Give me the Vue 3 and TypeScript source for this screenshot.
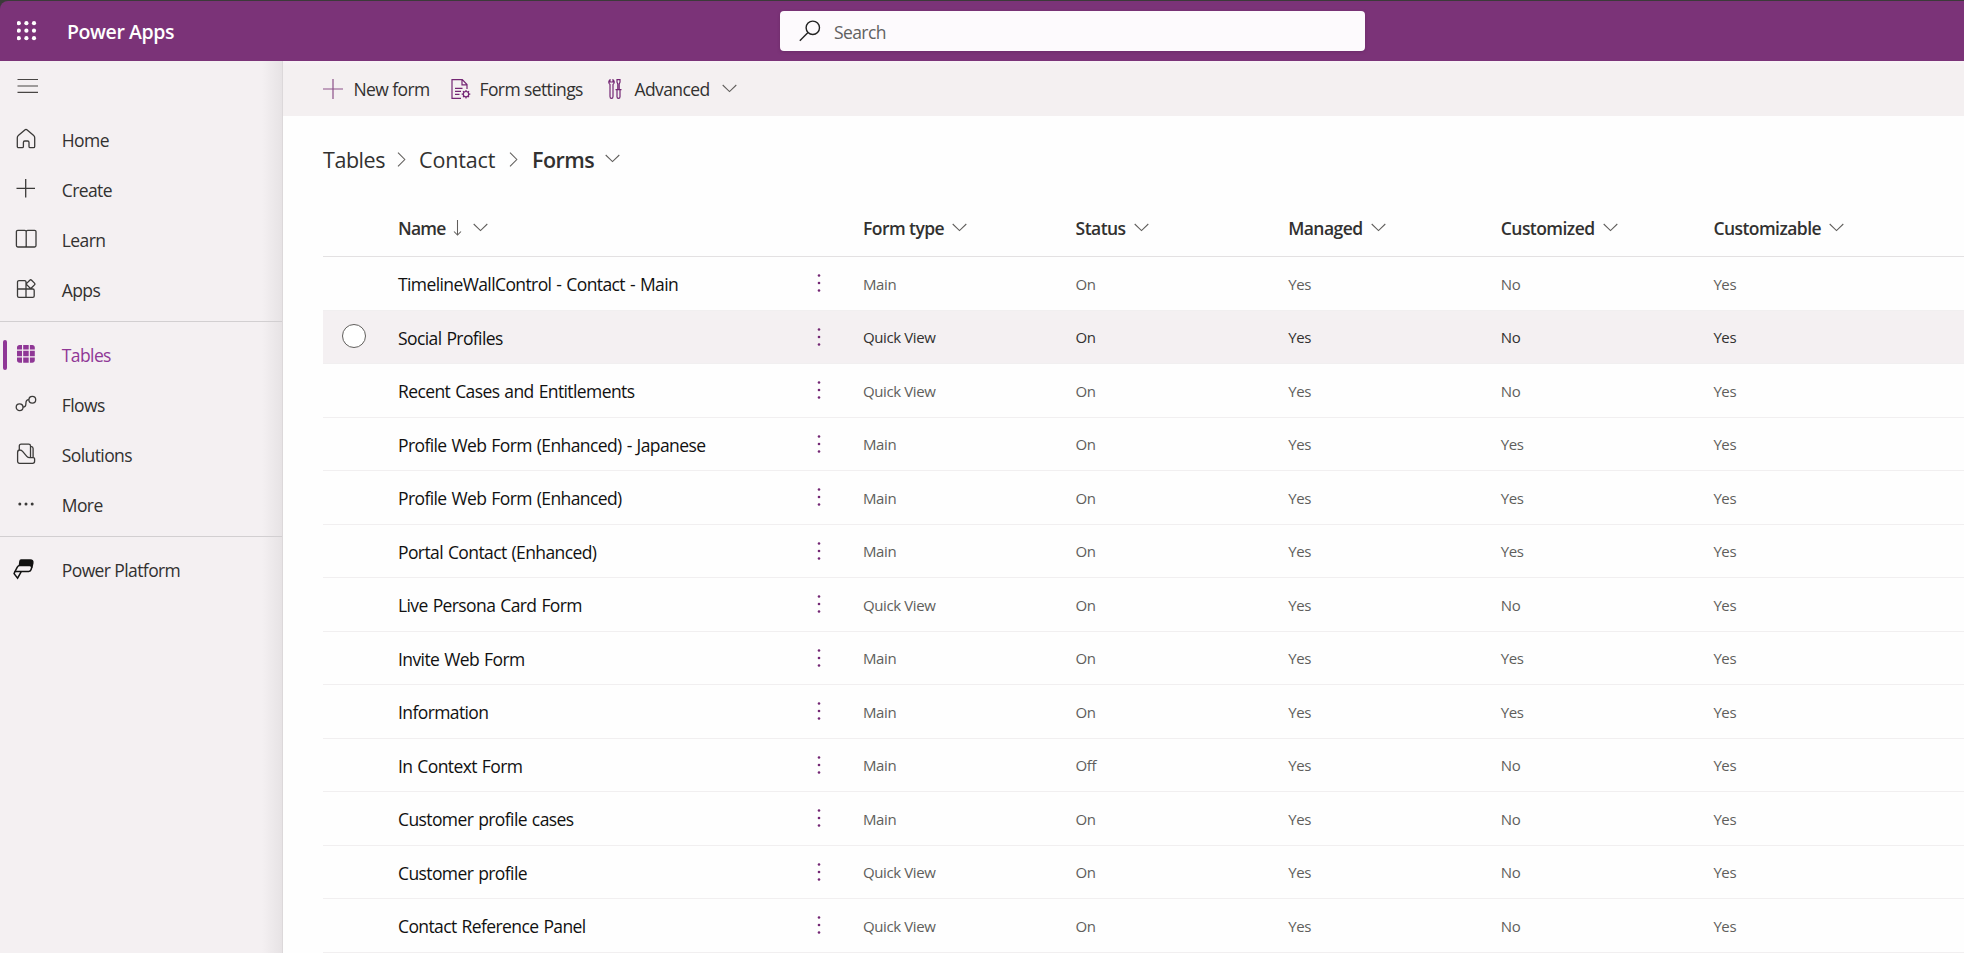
<script setup lang="ts">
interface NavItem { label: string; icon: string }
interface FormRow { name: string; type: string; status: string; managed: string; customized: string; customizable: string }

const navGroups: NavItem[][] = [
  [
    { label: 'Home', icon: 'home' },
    { label: 'Create', icon: 'plus' },
    { label: 'Learn', icon: 'book' },
    { label: 'Apps', icon: 'apps' },
  ],
  [
    { label: 'Tables', icon: 'tables' },
    { label: 'Flows', icon: 'flows' },
    { label: 'Solutions', icon: 'solutions' },
    { label: 'More', icon: 'more' },
  ],
  [{ label: 'Power Platform', icon: 'platform' }],
]

const columns: string[] = ['Form type', 'Status', 'Managed', 'Customized', 'Customizable']

const row = (name: string, type: string, customized: string, status = 'On'): FormRow => ({
  name, type, status, managed: 'Yes', customized, customizable: 'Yes',
})

const rows: FormRow[] = [
  row('TimelineWallControl - Contact - Main', 'Main', 'No'),
  row('Social Profiles', 'Quick View', 'No'),
  row('Recent Cases and Entitlements', 'Quick View', 'No'),
  row('Profile Web Form (Enhanced) - Japanese', 'Main', 'Yes'),
  row('Profile Web Form (Enhanced)', 'Main', 'Yes'),
  row('Portal Contact (Enhanced)', 'Main', 'Yes'),
  row('Live Persona Card Form', 'Quick View', 'No'),
  row('Invite Web Form', 'Main', 'Yes'),
  row('Information', 'Main', 'Yes'),
  row('In Context Form', 'Main', 'No', 'Off'),
  row('Customer profile cases', 'Main', 'No'),
  row('Customer profile', 'Quick View', 'No'),
  row('Contact Reference Panel', 'Quick View', 'No'),
]
const hovered = 1
</script>

<template>
  <div class="app">
    <header class="topbar">
      <svg class="waffle" width="20" height="20" viewBox="0 0 20 20" fill="#fff">
        <template v-for="y in 3" :key="y">
          <circle v-for="x in 3" :key="x" :cx="x * 7.6 - 5.8" :cy="y * 7.5 - 5.3" r="2.1" />
        </template>
      </svg>
      <span class="brand">Power Apps</span>
      <div class="search">
        <svg width="22" height="22" viewBox="0 0 22 22" fill="none" stroke="#222" stroke-width="1.4">
          <circle cx="13.8" cy="7.8" r="6.7" /><path d="M9 12.6 L.8 20.8" />
        </svg>
        <span class="search-text">Search</span>
      </div>
    </header>

    <div class="body">
      <nav class="sidebar">
        <div class="burger">
          <svg width="22" height="16" viewBox="0 0 22 16" stroke="#484644" stroke-width="1.2"><path d="M.5 1.5H21M.5 8H21M.5 14.3H21" /></svg>
        </div>
        <ul v-for="(group, g) in navGroups" :key="g" class="group">
          <li v-for="item in group" :key="item.label" class="nav" :class="{ active: item.label === 'Tables' }">
            <svg v-if="item.icon === 'home'" class="ico" viewBox="0 0 22 22"><path d="M2.3 9.7c0-.9.4-1.6 1-2.1l6.5-5.7c.8-.7 1.6-.7 2.4 0l6.500 5.700c.6.5 1 1.200 1 2.100v8.800c0 .7-.5 1.200-1.200 1.200h-3.300c-.7 0-1.200-.5-1.200-1.200v-4c0-.9-.5-1.500-1.400-1.500H9.800c-.9 0-1.400.6-1.400 1.500v4c0 .7-.5 1.200-1.200 1.200H3.500c-.7 0-1.200-.5-1.200-1.200z" /></svg>
            <svg v-else-if="item.icon === 'plus'" class="ico" viewBox="0 0 22 22"><path d="M10.700 1v18.500M1.500 10.300h18.500" /></svg>
            <svg v-else-if="item.icon === 'book'" class="ico" viewBox="0 0 22 22"><path d="M11.200 3.600C11.200 2.800 10.500 2.300 9.700 2.300H2.800c-.8 0-1.400.5-1.400 1.300v14c0 .8.600 1.400 1.400 1.400h6.900c.8 0 1.500-.5 1.500-1.300zM11.200 3.600c0-.8.700-1.300 1.500-1.300h6.900c.8 0 1.400.5 1.400 1.300v14c0 .8-.600 1.400-1.400 1.400h-6.900c-.8 0-1.500-.5-1.500-1.300z" /></svg>
            <svg v-else-if="item.icon === 'apps'" class="ico" viewBox="0 0 22 22"><path d="M11 10.800V19.300M11 11V4c0-.8-.6-1.400-1.400-1.400H4C3.200 2.600 2.500 3.200 2.500 4v13.900c0 .8.7 1.400 1.500 1.400h13.800c.8 0 1.400-.6 1.400-1.400v-5.500c0-.8-.6-1.400-1.400-1.400H2.500M14.800 2.200c.6-.6 1.200-.6 1.800 0l2.900 2.900c.6.600.6 1.200 0 1.800l-2.900 2.900c-.6.600-1.200.600-1.800 0l-2.900-2.900c-.6-.6-.6-1.200 0-1.800z" /></svg>
            <svg v-else-if="item.icon === 'tables'" class="ico solid" viewBox="0 0 22 22">
              <path d="M4.500 2H7v4.500H2v-2C2 3 3 2 4.500 2zM8.200 2h5.500v4.500H8.200zM14.900 2h2.400c1.500 0 2.500 1 2.500 2.500v2h-4.900zM2 7.800h5v5.400H2zM8.200 7.800h5.500v5.400H8.200zM14.900 7.800h4.900v5.400h-4.900zM2 14.500h5v5.300H4.500C3 19.800 2 18.800 2 17.300zM8.200 14.500h5.500v5.300H8.200zM14.900 14.500h4.900v2.800c0 1.500-1 2.500-2.500 2.500h-2.400z" />
            </svg>
            <svg v-else-if="item.icon === 'flows'" class="ico" viewBox="0 0 22 22"><circle cx="4.600" cy="14.200" r="3.400" /><circle cx="17.300" cy="6.700" r="3.400" /><path d="M8 14.200c2.200 0 2.900-1 2.900-3.700s.8-3.800 3-3.800" /></svg>
            <svg v-else-if="item.icon === 'solutions'" class="ico" viewBox="0 0 22 22"><path d="M4.300 6.800V3C4.300 1.900 5 1.200 6.100 1.200h7.600c1.100 0 1.800.7 1.800 1.800v11.500M2.600 9.500c0-1.700.8-2.500 2.200-2.500 1.300 0 2.100.5 3 1.600l4 4.700c.8.900 1.700 1.300 2.900 1.300h3.600c.8 0 1.300.5 1.300 1.200v2.500c0 1.200-.8 2-2 2H4.600c-1.200 0-2-.8-2-2zM16.200 3.300c1.300.2 1.900 1 1.900 2.200v9" /></svg>
            <svg v-else-if="item.icon === 'more'" class="ico solid" viewBox="0 0 22 22"><circle cx="4.800" cy="11" r="1.500" /><circle cx="11" cy="11" r="1.500" /><circle cx="17.200" cy="11" r="1.500" /></svg>
            <svg v-else class="ico platform" viewBox="0 0 22 22">
              <path fill="#111" d="M6 2h9.300c2 0 2.800 1.200 2.500 3l-.7 3.200c-.5-.9-1.400-1.400-2.600-1.400H4.500L5 3c.1-.6.500-1 1-1z" />
              <path d="M4.800 7.600h9.900c1.500 0 2.300.8 1.900 2.200l-.5 1.700c-.3 1.200-1.200 1.900-2.400 1.900H0l2.300-4.300c.6-1 1.300-1.500 2.500-1.500zM0 13.400l-.9 2.200 3.500 4.500 3.800-6.700" />
            </svg>
            <span class="nav-label">{{ item.label }}</span>
          </li>
        </ul>
      </nav>

      <main class="main">
        <div class="commands">
          <svg class="c-plus" width="20" height="20" viewBox="0 0 20 20"><path d="M10 0v20M0 10h20" /></svg>
          <span class="cmd cmd-new">New form</span>
          <svg class="c-doc" width="20" height="20" viewBox="0 0 20 20">
            <path d="M10 19.300H1V.7h10.300l4.700 4.800v4.500M11 .9v4.900h5M4 9.300h7.500M4 12.300h6M4 15.300h4.500" />
            <circle cx="15" cy="15.200" r="2.700" /><path d="M15 10.900v1.800M15 17.700v1.800M10.700 15.200h1.800M17.500 15.200h1.800M12 12.200l1.200 1.200M16.800 17l1.200 1.200M18 12.200l-1.200 1.200M13.200 17l-1.200 1.200" />
          </svg>
          <span class="cmd cmd-settings">Form settings</span>
          <svg class="c-tools" width="14" height="20" viewBox="0 0 14 20">
            <path d="M2 .8C.7 1.600.5 3.400 1.200 4.500l.8 1v12c0 1.200.6 1.900 1.500 1.900s1.500-.7 1.500-1.900v-12l.8-1C6.500 3.400 6.300 1.600 5 .8V3H2zM9 .7h3v2.500l-.8 1.800v5.500H9.800V5L9 3.200zM7.500 10.700h6M9 10.700v7.100c0 1 .6 1.600 1.500 1.600s1.500-.6 1.500-1.600v-7.100" />
          </svg>
          <span class="cmd cmd-adv">Advanced</span>
          <svg class="chev" width="15" height="9" viewBox="0 0 15 9"><path d="M.7 1l6.800 6.600L14.300 1" /></svg>
        </div>

        <div class="crumbs">
          <span class="crumb c1">Tables</span>
          <svg class="sep" width="9" height="15" viewBox="0 0 9 15"><path d="M1 .7l6.800 6.800L1 14.300" /></svg>
          <span class="crumb c2">Contact</span>
          <svg class="sep" width="9" height="15" viewBox="0 0 9 15"><path d="M1 .7l6.800 6.800L1 14.300" /></svg>
          <span class="crumb current">Forms</span>
          <svg class="chev" width="15" height="9" viewBox="0 0 15 9"><path d="M.7 1l6.800 6.600L14.300 1" /></svg>
        </div>

        <div class="grid">
          <div class="line head">
            <div class="cell name-head">
              <span class="th th-name">Name</span>
              <svg class="sort" width="9" height="16" viewBox="0 0 9 16"><path d="M4.500 0v15M1 11.500l3.500 3.500L8 11.500" /></svg>
              <svg class="chev" width="15" height="9" viewBox="0 0 15 9"><path d="M.7 1l6.800 6.600L14.300 1" /></svg>
            </div>
            <div v-for="c in columns" :key="c" class="cell">
              <span class="th">{{ c }}</span>
              <svg class="chev" width="15" height="9" viewBox="0 0 15 9"><path d="M.7 1l6.800 6.600L14.300 1" /></svg>
            </div>
          </div>
          <div v-for="(r, i) in rows" :key="r.name" class="line" :class="{ hover: i === hovered }">
            <div class="pick"><span v-if="i === hovered" class="radio"></span></div>
            <div class="name">{{ r.name }}</div>
            <svg class="dots" width="4" height="20" viewBox="0 0 4 20"><circle cx="2" cy="2.500" r="1.300" /><circle cx="2" cy="10" r="1.300" /><circle cx="2" cy="17.500" r="1.300" /></svg>
            <div class="cell val">{{ r.type }}</div>
            <div class="cell val">{{ r.status }}</div>
            <div class="cell val">{{ r.managed }}</div>
            <div class="cell val">{{ r.customized }}</div>
            <div class="cell val">{{ r.customizable }}</div>
          </div>
        </div>
      </main>
    </div>
  </div>
</template>

<style>
body { overflow: hidden; background: #fff; }
</style>

<style scoped>
* { box-sizing: border-box; }
.app {
  display: flex; flex-direction: column; height: 953px; overflow: hidden;
  font-family: 'Open Sans', 'Noto Sans', sans-serif; font-size: 17.500px; color: #323130; background: #3b3a39;
}
.app svg { flex: none; fill: none; }
.topbar {
  display: flex; align-items: center; height: 60px; margin-top: 1px; padding-left: 17px;
  background: #7b3378; border-top-left-radius: 8px; flex: none;
}
.app .waffle { fill: #fff; }
.brand { width: 712px; margin-left: 30px; color: #fff; font-size: 19.500px; font-weight: 600; letter-spacing: -.4px; padding-top: 1px; }
.search {
  display: flex; align-items: center; width: 585px; height: 40px; margin-left: 1px; padding-left: 19px;
  background: #fdfafd; border-radius: 4px; box-shadow: 0 1px 3px #5c245a80;
}
.search-text { margin: 1px 0 0 13px; color: #616161; letter-spacing: -.6px; }
.body { display: flex; flex: 1; min-height: 0; background: #fefefe; }
.sidebar {
  width: 283px; flex: none; border-right: 1px solid #dcd8da;
  background: linear-gradient(90deg, transparent 262px, #e6e2e4 283px), #f4f0f2;
}
.burger { height: 53px; padding: 17px 0 0 17px; }
.burger svg { display: block; }
.group { margin: 0; padding: 0; list-style: none; }
.group + .group { margin-top: 7px; padding-top: 7px; border-top: 1px solid #d2cfd1; }
.nav { display: flex; align-items: center; height: 50px; padding-left: 15.300px; }
.ico { width: 22px; height: 22px; margin-top: -1px; stroke: #3b3a39; stroke-width: 1.3; overflow: visible; }
.app .ico.solid { fill: #3b3a39; stroke: none; }
.ico.platform { stroke: #111; stroke-width: 1.5; }
.nav-label { margin-left: 24.500px; padding-top: 1px; letter-spacing: -.6px; }
.nav.active { color: #8f3796; position: relative; }
.app .nav.active .ico { fill: #8f3796; }
.nav.active::before { content: ''; position: absolute; left: 3px; top: 11px; width: 4px; height: 30px; border-radius: 2px; background: #8f3796; }
.main { flex: 1; min-width: 0; }
.commands { display: flex; align-items: center; height: 55px; padding-left: 40px; background: linear-gradient(#f8f2f6, #f4f0f1 5px); }
.c-plus { stroke: #8c5089; stroke-width: 1.2; }
.c-doc, .c-tools { stroke: #742774; stroke-width: 1.2; }
.cmd { letter-spacing: -.6px; padding-top: 1px; white-space: nowrap; }
.cmd-new { width: 77px; margin: 0 20px 0 10.500px; }
.cmd-settings { width: 106px; margin: 0 22.500px 0 9px; }
.cmd-adv { width: 77px; margin: 0 10px 0 12.500px; }
.chev, .sep, .sort { stroke: #605e5c; stroke-width: 1.05; }
.crumbs { display: flex; align-items: center; height: 86px; padding-left: 40px; }
.crumb { font-size: 21.500px; letter-spacing: -.45px; white-space: nowrap; }
.c1 { width: 61px; margin-right: 13px; }
.c2 { width: 78px; margin: 0 12px 0 13px; letter-spacing: -.15px; }
.current { width: 63px; margin: 0 10px 0 14px; font-weight: 600; letter-spacing: -.5px; }
.crumbs .chev { margin-top: -2px; }
.grid { margin-left: 40px; }
.line { display: flex; align-items: center; height: 53.500px; border-bottom: 1px solid #f1eff0; }
.line.head { height: 55px; padding-bottom: 2px; border-bottom-color: #e3e1e2; }
.cell { display: flex; align-items: center; width: 212.600px; flex: none; white-space: nowrap; }
.th { font-size: 17.500px; font-weight: 600; letter-spacing: -.55px; }
.th-name { letter-spacing: -.8px; }
.th + svg { margin-left: 8px; }
.head .chev { margin-top: -2px; }
.sort + .chev { margin-left: 11px; }
.name-head { width: 540px; padding-left: 75px; }
.pick { width: 75px; padding-left: 18.500px; flex: none; }
.radio { display: block; width: 24px; height: 24px; margin-top: -1px; border: 1.500px solid #605e5c; border-radius: 50%; background: #fff; }
.name { width: 418.500px; flex: none; color: #111; letter-spacing: -.6px; word-spacing: 1px; padding-top: 2px; white-space: nowrap; }
.app .dots { margin-right: 42.500px; fill: #742774; }
.val { color: #605e5c; font-size: 15px; letter-spacing: -.4px; padding-top: 1px; }
.hover { background: #f4f0f2; }
.hover .val { color: #323130; }
</style>
